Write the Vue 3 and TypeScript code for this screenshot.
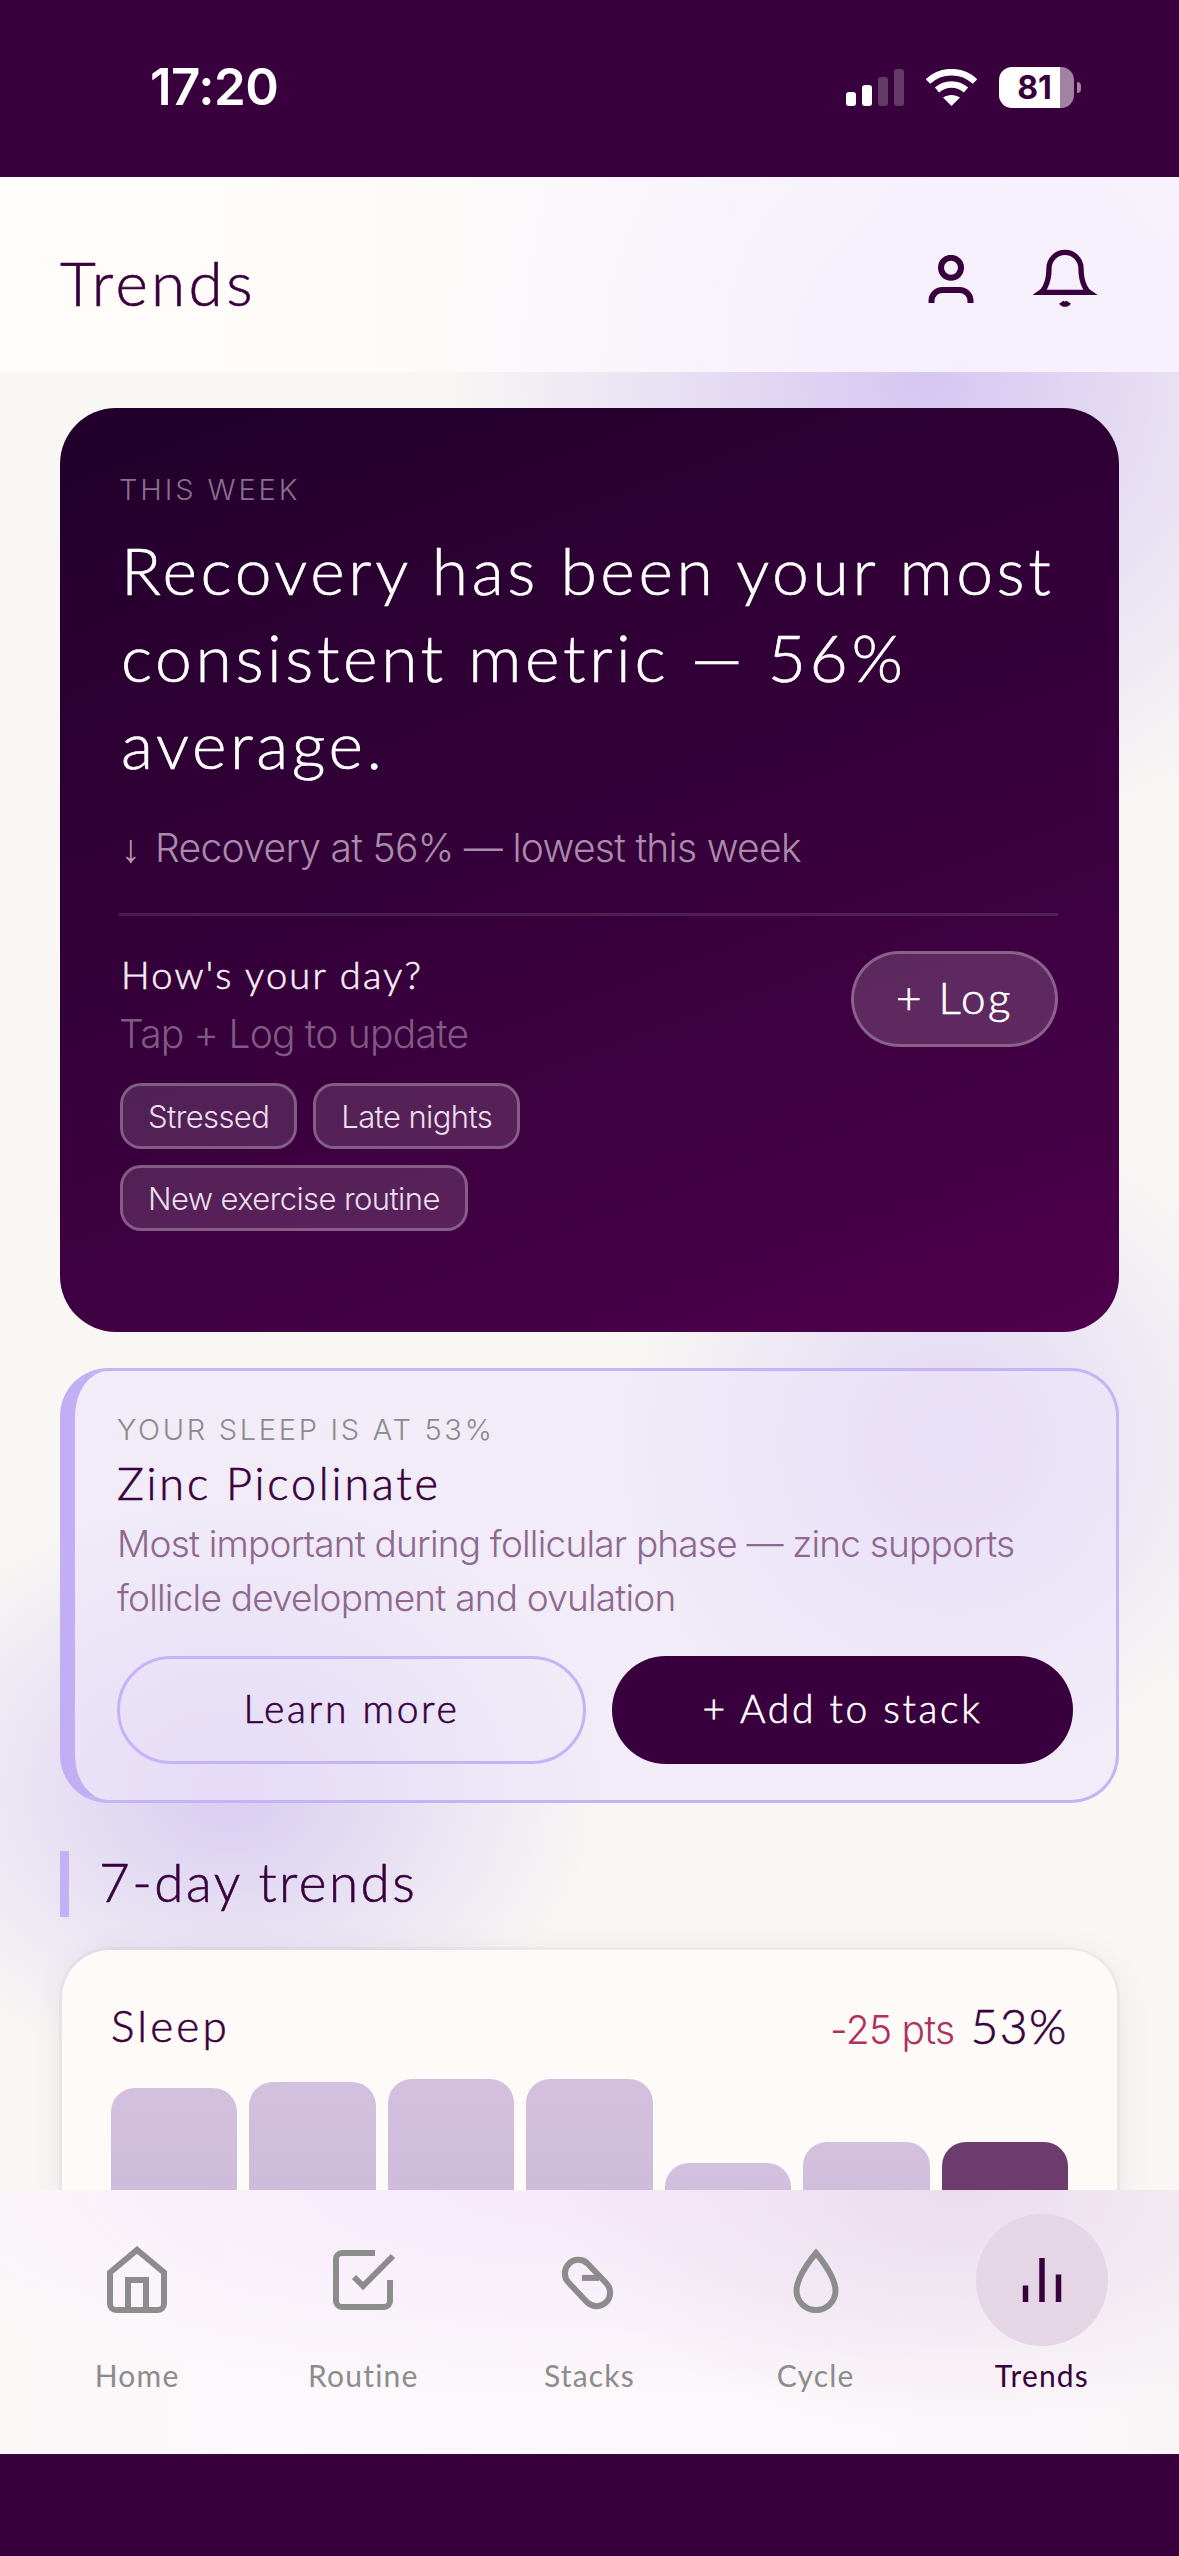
<script setup lang="ts">
const chips = ['Stressed', 'Late nights', 'New exercise routine']

const bars = [
  { id: 'mon', height: 212 },
  { id: 'tue', height: 218 },
  { id: 'wed', height: 221 },
  { id: 'thu', height: 221 },
  { id: 'fri', height: 137 },
  { id: 'sat', height: 158 },
  { id: 'sun', height: 158, today: true },
]

const navItems = [
  {
    label: 'Home',
    size: 72,
    paths: ['M3 9.5 12 2l9 7.5V20a2 2 0 0 1-2 2H5a2 2 0 0 1-2-2z', 'M9 22V12h6v10'],
  },
  {
    label: 'Routine',
    size: 72,
    paths: ['M9 11l3 3L22 4', 'M21 12v7a2 2 0 0 1-2 2H5a2 2 0 0 1-2-2V5a2 2 0 0 1 2-2h11'],
  },
  {
    label: 'Stacks',
    size: 72,
    paths: ['M11.18 6.49 17.51 13.15A4.5 4.5 0 0 1 11.15 19.51L4.82 12.85A4.5 4.5 0 0 1 11.18 6.49Z', 'M9.3 11.3H15'],
  },
  {
    label: 'Cycle',
    size: 72,
    paths: ['M12 3C12 3 5.5 10.5 5.5 15.5a6.5 6.5 0 0 0 13 0C18.5 10.5 12 3 12 3Z'],
  },
  {
    label: 'Trends',
    size: 66,
    paths: ['M18 20V10', 'M12 20V4', 'M6 20v-6'],
    active: true,
  },
]
</script>

<template>
  <div class="phone">
    <!-- status bar -->
    <div class="status">
      <span class="clock">17:20</span>
      <div class="status-icons">
        <div class="signal">
          <i class="sig sig-1"></i>
          <i class="sig sig-2"></i>
          <i class="sig sig-3"></i>
          <i class="sig sig-4"></i>
        </div>
        <svg class="wifi" width="51" height="37" viewBox="0 0 51 37" fill="none">
          <path d="M2 12.5C15 0 36 0 49 12.5" stroke="#fff" stroke-width="6.5" />
          <path d="M11 21c8.5-7.5 20.5-7.5 29 0" stroke="#fff" stroke-width="6.5" />
          <path d="M25.5 37 17 28.5c5-3.5 12-3.5 17 0z" fill="#fff" />
        </svg>
        <div class="battery">
          <span class="battery-num">81</span>
        </div>
        <i class="battery-nub"></i>
      </div>
    </div>

    <!-- header -->
    <header class="top">
      <h1 class="page-title">Trends</h1>
      <div class="top-icons">
        <svg width="60" height="48" viewBox="0 0 60 48" fill="none" stroke="#38003c" stroke-width="6">
          <circle cx="30" cy="12.8" r="10" />
          <path d="M10.5 48v-2a11 11 0 0 1 11-11h17a11 11 0 0 1 11 11v2" />
        </svg>
        <svg width="64" height="64" viewBox="0 0 24 24" fill="none" stroke="#38003c" stroke-width="2">
          <path d="M18 8A6 6 0 0 0 6 8c0 7-3 9-3 9h18s-3-2-3-9" />
          <path d="M13.4 20.7a1.7 1.7 0 0 1-2.8 0" />
        </svg>
      </div>
    </header>

    <!-- scroll area, clipped by the nav -->
    <main class="content">
      <section class="hero">
        <p class="hero-eyebrow">THIS WEEK</p>
        <h2 class="hero-title">Recovery has been your most consistent metric — 56% average.</h2>
        <p class="hero-sub"><span class="hero-arrow">↓</span> Recovery at 56% — lowest this week</p>
        <div class="hero-rule"></div>
        <div class="mood">
          <div class="mood-left">
            <p class="mood-title">How's your day?</p>
            <p class="mood-hint">Tap + Log to update</p>
            <div class="chips">
              <span v-for="chip in chips" :key="chip" class="chip">{{ chip }}</span>
            </div>
          </div>
          <button class="log-btn">+ Log</button>
        </div>
      </section>

      <section class="supp">
        <p class="supp-eyebrow">YOUR SLEEP IS AT 53%</p>
        <h3 class="supp-name">Zinc Picolinate</h3>
        <p class="supp-desc">Most important during follicular phase — zinc supports follicle development and ovulation</p>
        <div class="supp-actions">
          <button class="btn btn-ghost">Learn more</button>
          <button class="btn btn-solid">+ Add to stack</button>
        </div>
      </section>

      <h2 class="section-title">7-day trends</h2>

      <section class="trend-card">
        <div class="trend-head">
          <span class="trend-name">Sleep</span>
          <span class="trend-values">
            <span class="trend-delta">-25 pts</span>
            <span class="trend-pct">53%</span>
          </span>
        </div>
        <div class="bars">
          <div
            v-for="bar in bars"
            :key="bar.id"
            class="bar"
            :class="{ 'bar-today': bar.today }"
            :style="{ height: bar.height + 'px' }"
          ></div>
        </div>
      </section>
    </main>

    <!-- tab bar -->
    <nav class="tabs">
      <div v-for="item in navItems" :key="item.label" class="tab" :class="{ 'tab-active': item.active }">
        <div class="tab-icon">
          <svg :width="item.size" :height="item.size" viewBox="0 0 24 24" fill="none" stroke="currentColor" stroke-width="2">
            <path v-for="d in item.paths" :key="d" :d="d" />
          </svg>
        </div>
        <span class="tab-label">{{ item.label }}</span>
      </div>
    </nav>
    <div class="home-strip"></div>
  </div>
</template>

<style>
html,
body {
  margin: 0;
  background: #38003c;
}
</style>

<style scoped>
.phone {
  width: 1179px;
  height: 2556px;
  display: flex;
  flex-direction: column;
  overflow: hidden;
  font-family: Inter, 'Liberation Sans', sans-serif;
  color: #38003c;
}

p,
h1,
h2,
h3 {
  margin: 0;
  font-weight: 400;
}

/* display face: Lato light with a hair of stroke, sits between light and regular */
.page-title,
.hero-title,
.mood-title,
.log-btn,
.supp-name,
.btn,
.section-title,
.trend-name,
.trend-pct {
  font-family: Lato, sans-serif;
  font-weight: 300;
  -webkit-text-stroke: 0.6px currentColor;
}

/* status bar */
.status {
  height: 177px;
  flex-shrink: 0;
  background: #38003c;
  display: flex;
  justify-content: space-between;
  padding: 60px 98px 0 150px;
  box-sizing: border-box;
  color: #fff;
}

.clock {
  font-size: 51px;
  font-weight: 600;
  line-height: 54px;
  letter-spacing: -0.5px;
}

.status-icons {
  display: flex;
  align-items: flex-start;
  padding-top: 7px;
}

.signal {
  display: flex;
  align-items: flex-end;
  gap: 6px;
  height: 37px;
  margin-top: 2px;
  margin-right: 22px;
}

.sig {
  width: 10px;
  border-radius: 3px;
  background: #fff;
}

.sig-1 { height: 14px; }
.sig-2 { height: 21px; }
.sig-3 { height: 29px; background: #633a66; }
.sig-4 { height: 37px; background: #633a66; }

.wifi {
  margin-top: 2px;
  margin-right: 22px;
}

.battery {
  width: 75px;
  height: 41px;
  border-radius: 13px;
  background: linear-gradient(90deg, #fff 81%, #a083a3 81%);
  display: flex;
  align-items: center;
  justify-content: center;
  padding-right: 4px;
  box-sizing: border-box;
}

.battery-num {
  font-size: 32px;
  font-weight: 700;
  line-height: 1;
  color: #38003c;
}

.battery-nub {
  width: 4px;
  height: 11px;
  margin: 15px 0 0 3px;
  border-radius: 0 4px 4px 0;
  background: #a083a3;
}

/* header */
.top {
  height: 195px;
  flex-shrink: 0;
  box-sizing: border-box;
  display: flex;
  align-items: center;
  justify-content: space-between;
  padding: 0 82px 0 60px;
  background:
    radial-gradient(circle 560px at 960px 190px, #f5effd 0%, rgba(245, 239, 253, 0) 100%),
    linear-gradient(90deg, #fffcf9 15%, #f9f6fc 100%);
}

.page-title {
  font-size: 62px;
  letter-spacing: 3.4px;
  line-height: 70px;
  margin-top: 14px;
}

.top-icons {
  display: flex;
  align-items: center;
  gap: 52px;
  margin-top: 8px;
}

/* scroll area */
.content {
  flex: 1;
  min-height: 0;
  overflow: hidden;
  padding: 36px 60px 0;
  background:
    radial-gradient(circle 480px at 925px 0px, #d6c6f2 0%, rgba(214, 198, 242, 0) 100%),
    radial-gradient(circle 330px at 950px 1070px, #e0d5f4 0%, rgba(224, 213, 244, 0) 100%),
    radial-gradient(ellipse 370px 290px at 230px 1418px, #d8ccf2 0%, rgba(216, 204, 242, 0.55) 45%, rgba(216, 204, 242, 0) 100%),
    #f8f7f4;
}

/* hero card */
.hero {
  height: 924px;
  box-sizing: border-box;
  border-radius: 56px;
  padding: 64px 61px 0 59px;
  background: linear-gradient(160deg, #21002a 0%, #38003c 55%, #4e004c 100%);
  color: #fff;
}

.hero-eyebrow {
  font-size: 29px;
  font-weight: 300;
  line-height: 36px;
  letter-spacing: 2.9px;
  color: #8a6f8e;
}

.hero-title {
  margin: 18px 0 0 2px;
  font-size: 66px;
  line-height: 87px;
  letter-spacing: 3.6px;
}

.hero-sub {
  margin: 36px 0 0 2px;
  font-size: 39px;
  font-weight: 300;
  line-height: 50px;
  letter-spacing: -0.7px;
  color: #a98cac;
}

.hero-arrow {
  margin-right: 5px;
  font-family: 'Liberation Sans', sans-serif;
  color: #b99aa8;
}

.hero-rule {
  height: 3px;
  margin-top: 39px;
  background: rgba(255, 255, 255, 0.12);
}

.mood {
  display: flex;
  justify-content: space-between;
  align-items: flex-start;
  margin-top: 35px;
}

.mood-left {
  flex: 1;
  min-width: 0;
}

.mood-title {
  margin-left: 2px;
  font-size: 38px;
  line-height: 46px;
  letter-spacing: 2.2px;
  color: #f6eef6;
}

.mood-hint {
  margin-top: 12px;
  font-size: 39px;
  font-weight: 300;
  line-height: 50px;
  letter-spacing: -0.8px;
  color: #7f5a84;
}

.chips {
  display: flex;
  flex-wrap: wrap;
  gap: 16px;
  margin-top: 24px;
  padding-left: 1px;
}

.chip {
  height: 66px;
  box-sizing: border-box;
  display: flex;
  align-items: center;
  padding: 0 25px;
  border: 3px solid rgba(255, 255, 255, 0.27);
  border-radius: 21px;
  background: rgba(255, 255, 255, 0.13);
  font-size: 31px;
  font-weight: 300;
  letter-spacing: -0.6px;
  color: #ecdfec;
}

.log-btn {
  width: 207px;
  height: 96px;
  flex-shrink: 0;
  padding: 0 0 5px;
  border: 3px solid rgba(255, 255, 255, 0.27);
  border-radius: 48px;
  background: rgba(255, 255, 255, 0.16);
  font-size: 44px;
  letter-spacing: 2.5px;
  color: #fff;
}

/* supplement card */
.supp {
  margin-top: 36px;
  height: 435px;
  box-sizing: border-box;
  border: 3px solid #c6b3f6;
  border-left: 15px solid #c2aef5;
  border-radius: 48px;
  padding: 41px 42px 0 42px;
  background: rgba(236, 228, 250, 0.6);
}

.supp-eyebrow {
  font-size: 29px;
  font-weight: 300;
  line-height: 36px;
  letter-spacing: 2.7px;
  color: #8b8b8b;
}

.supp-name {
  margin-top: 7px;
  font-size: 45px;
  line-height: 56px;
  letter-spacing: 2.8px;
}

.supp-desc {
  margin-top: 6px;
  font-size: 37px;
  font-weight: 300;
  line-height: 54px;
  letter-spacing: -0.8px;
  color: #8f688f;
}

.supp-actions {
  display: flex;
  gap: 26px;
  margin-top: 31px;
  margin-right: -3px;
}

.btn {
  height: 108px;
  padding: 0 0 5px;
  border-radius: 54px;
  font-size: 39px;
  letter-spacing: 2.7px;
}

.btn-ghost {
  width: 469px;
  border: 3px solid #c6b3f6;
  background: transparent;
  color: #38003c;
}

.btn-solid {
  width: 461px;
  border: none;
  background: #38003c;
  color: #fff;
}

/* 7 day section */
.section-title {
  margin-top: 48px;
  border-left: 9px solid #c4b0f5;
  padding: 0 0 4px 30px;
  font-size: 53px;
  line-height: 62px;
  letter-spacing: 2.5px;
}

.trend-card {
  margin: 33px 2px 0;
  height: 400px;
  box-sizing: border-box;
  border-radius: 48px;
  padding: 45px 49px 0 49px;
  background: #fdfaf8;
  box-shadow: 0 0 0 3px rgba(56, 0, 60, 0.03), 0 6px 36px rgba(56, 0, 60, 0.08);
}

.trend-head {
  display: flex;
  justify-content: space-between;
  align-items: center;
  height: 60px;
}

.trend-name {
  font-size: 44px;
  letter-spacing: 3.2px;
}

.trend-values {
  display: flex;
  align-items: baseline;
  gap: 16px;
}

.trend-delta {
  font-size: 39px;
  font-weight: 300;
  letter-spacing: -0.7px;
  color: #b03060;
}

.trend-pct {
  font-size: 48px;
  letter-spacing: 1.5px;
}

.bars {
  display: flex;
  align-items: flex-end;
  gap: 12px;
  height: 221px;
  margin-top: 24px;
}

.bar {
  flex: 1;
  border-radius: 24px 24px 0 0;
  background: linear-gradient(180deg, #d2c0de, #cbb8d9);
}

.bar-today {
  background: #6b3c6d;
}

/* tab bar */
.tabs {
  height: 264px;
  flex-shrink: 0;
  box-sizing: border-box;
  display: flex;
  padding: 24px 24px 0;
  background:
    radial-gradient(ellipse 420px 240px at 960px 0px, #eaddec 0%, rgba(234, 221, 236, 0) 100%),
    radial-gradient(ellipse 720px 210px at 560px 0px, #f6e9fb 0%, rgba(246, 233, 251, 0) 100%),
    linear-gradient(90deg, #fbf8f8, #fcf8fb 20%, #fbf7fa 90%, #f9f6f7);
}

.tab {
  flex: 1;
  display: flex;
  flex-direction: column;
  align-items: center;
  color: #8c8c8c;
}

.tab-icon {
  width: 132px;
  height: 132px;
  border-radius: 50%;
  display: flex;
  align-items: center;
  justify-content: center;
}

.tab-label {
  margin-top: 11px;
  font-family: Lato, sans-serif;
  font-size: 30px;
  line-height: 36px;
  letter-spacing: 1.2px;
}

.tab-active {
  color: #38003c;
}

.tab-active .tab-icon {
  background: #e4d6e4;
}

.home-strip {
  height: 102px;
  flex-shrink: 0;
  background: #38003c;
}
</style>
